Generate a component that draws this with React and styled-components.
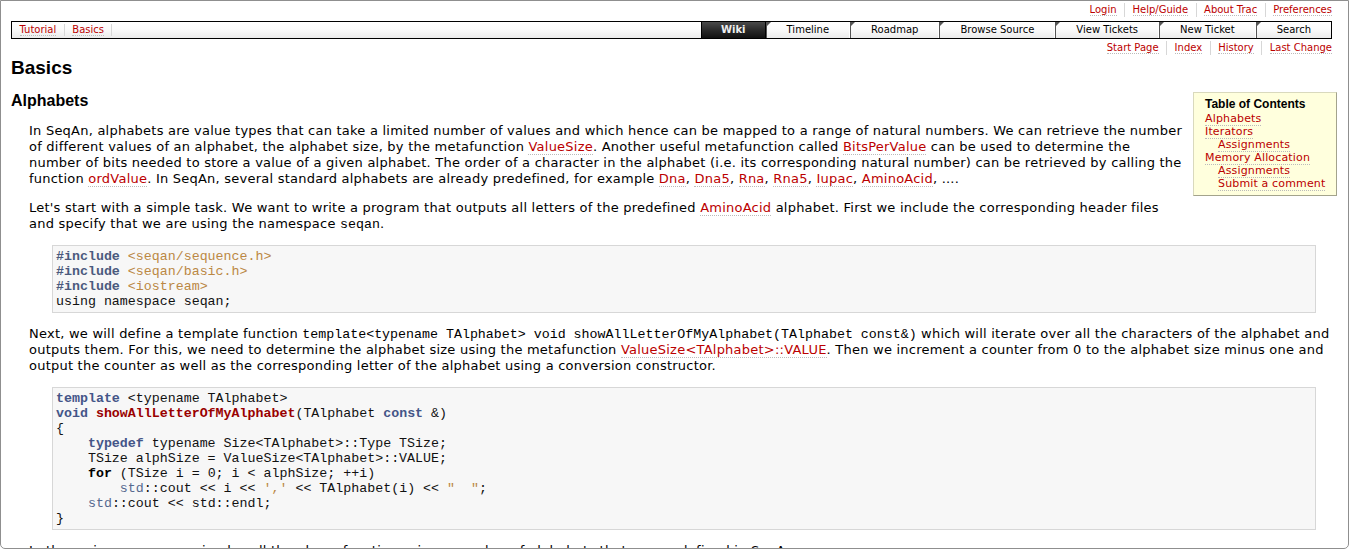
import React from 'react';
import styled, { createGlobalStyle } from 'styled-components';

const Global = createGlobalStyle`
  html, body { margin: 0; padding: 0; background: #fff; }
  body {
    font-family: "DejaVu Sans", Verdana, sans-serif;
    font-size: 13px;
    color: #000;
  }
`;

const Frame = styled.div`
  box-sizing: border-box;
  height: 549px;
  border: 1px solid #8f8f8f;
  border-radius: 0 0 5px 5px;
  overflow: hidden;
  padding: 0 16px 0 10px;
`;

const NavList = styled.ul`
  list-style: none;
  margin: 0;
  padding: 0;
  display: flex;
  justify-content: flex-end;
  align-items: center;
  height: ${(p) => p.$h}px;
  font-size: 10px;
`;

const NavItem = styled.li`
  padding: 0 7.5px;
  line-height: 14px;
  border-left: 1px solid #d7d7d7;
  &:first-child { border-left: none; }
  &:last-child { padding-right: 0; }
`;

const Link = styled.a`
  color: #b00;
  text-decoration: none;
  border-bottom: 1px dotted #bbb;
  cursor: pointer;
`;

const MainNav = styled.nav`
  margin-top: 3px;
  height: 18px;
  box-sizing: border-box;
  border: 1px solid #000;
  background: linear-gradient(#fff, #fbfbfb 45%, #ebebeb);
  display: flex;
  justify-content: space-between;
  align-items: stretch;
  font-size: 10px;
`;

const Crumbs = styled.ul`
  list-style: none;
  margin: 0;
  padding: 0;
  display: flex;
  align-items: center;
`;

const Crumb = styled.li`
  padding: 0 7.5px;
  line-height: 12px;
  border-right: 1px solid #d7d7d7;
`;

const Tabs = styled.ul`
  list-style: none;
  margin: 0;
  padding: 0;
  display: flex;
`;

const Tab = styled.li`
  position: relative;
  padding: 0 ${(p) => (p.$active ? 19 : 20)}px;
  line-height: 16px;
  border-left: 1px solid ${(p) => (p.$active ? '#000' : '#555')};
  border-right: 1px solid ${(p) => (p.$active ? '#000' : '#fff')};
  color: ${(p) => (p.$active ? '#eee' : '#000')};
  font-weight: ${(p) => (p.$active ? 'bold' : 'normal')};
  background: ${(p) => (p.$active ? 'linear-gradient(#4a4a4a, #2a2a2a 50%, #111)' : 'transparent')};
  &:last-child { border-right: none; }
  &::before {
    content: '';
    display: ${(p) => (p.$active ? 'none' : 'block')};
    position: absolute;
    top: 0;
    left: 0;
    width: 0;
    height: 0;
    border-top: 4px solid #555;
    border-right: 4px solid transparent;
  }
`;

const Title = styled.h1`
  font-family: "Liberation Sans", Arial, sans-serif;
  font-weight: bold;
  font-size: 19px;
  line-height: 22px;
  margin: 0;
`;

const Wiki = styled.div`
  padding-top: 13px;
`;

const Toc = styled.div`
  float: right;
  box-sizing: border-box;
  width: 144px;
  margin: 0 -5px 13px 10px;
  padding: 4px 10px 5px 10px;
  background: #ffd;
  border: 1px solid;
  border-color: #d9d9bd #a3a38c #a3a38c #d9d9bd;
`;

const TocTitle = styled.h4`
  font-family: "Liberation Sans", Arial, sans-serif;
  font-weight: bold;
  font-size: 12px;
  line-height: 15px;
  margin: 0 0 0 1px;
`;

const TocList = styled.ul`
  list-style: none;
  margin: 0;
  padding: 0 0 0 ${(p) => (p.$nested ? 13 : 1)}px;
  font-size: 11px;
  line-height: 13px;
  letter-spacing: 0.15px;
`;

const Section = styled.h2`
  font-family: "Liberation Sans", Arial, sans-serif;
  font-weight: bold;
  font-size: 16px;
  line-height: 18px;
  margin: 0;
`;

const Para = styled.p`
  margin: 13px 0 13px 18px;
  line-height: 16px;
  letter-spacing: 0.23px;
  white-space: nowrap;
`;

const Code = styled.code`
  font-family: "Liberation Mono", "Courier New", monospace;
  font-size: 13.3px;
  line-height: 14px;
  letter-spacing: 0;
`;

const Pre = styled.pre`
  margin: 13px 16px 13px 41px;
  padding: 3px;
  background: #f7f7f7;
  border: 1px solid #d7d7d7;
  font-family: "Liberation Mono", "Courier New", monospace;
  font-size: 13.3px;
  line-height: 15px;
  color: #111;
  white-space: pre;
`;

const Tok = styled.span`
  color: ${(p) =>
    ({ kt: '#445588', pp: '#4b5a7d', nf: '#990000', ns: '#56698f', s: '#bb8844', k: '#000' }[p.$t] || 'inherit')};
  font-weight: ${(p) => (['kt', 'pp', 'nf', 'k'].includes(p.$t) ? 'bold' : 'normal')};
`;

const metaLinks = ['Login', 'Help/Guide', 'About Trac', 'Preferences'];
const tabs = ['Wiki', 'Timeline', 'Roadmap', 'Browse Source', 'View Tickets', 'New Ticket', 'Search'];
const ctxLinks = ['Start Page', 'Index', 'History', 'Last Change'];

export default function App() {
  return (
    <>
      <Global />
      <Frame>
        <NavList $h={17}>
          {metaLinks.map((l) => (
            <NavItem key={l}><Link>{l}</Link></NavItem>
          ))}
        </NavList>

        <MainNav>
          <Crumbs>
            <Crumb><Link>Tutorial</Link></Crumb>
            <Crumb><Link>Basics</Link></Crumb>
          </Crumbs>
          <Tabs>
            {tabs.map((t) => (
              <Tab key={t} $active={t === 'Wiki'}>{t}</Tab>
            ))}
          </Tabs>
        </MainNav>

        <NavList $h={18}>
          {ctxLinks.map((l) => (
            <NavItem key={l}><Link>{l}</Link></NavItem>
          ))}
        </NavList>

        <Title>Basics</Title>

        <Wiki>
          <Toc>
            <TocTitle>Table of Contents</TocTitle>
            <TocList>
              <li><Link>Alphabets</Link></li>
              <li><Link>Iterators</Link>
                <TocList $nested><li><Link>Assignments</Link></li></TocList>
              </li>
              <li><Link>Memory Allocation</Link>
                <TocList $nested>
                  <li><Link>Assignments</Link></li>
                  <li><Link>Submit a comment</Link></li>
                </TocList>
              </li>
            </TocList>
          </Toc>

          <Section>Alphabets</Section>

          <Para>
            In SeqAn, alphabets are value types that can take a limited number of values and which hence can be mapped to a range of natural numbers. We can retrieve the number<br />
            of different values of an alphabet, the alphabet size, by the metafunction <Link>ValueSize</Link>. Another useful metafunction called <Link>BitsPerValue</Link> can be used to determine the<br />
            number of bits needed to store a value of a given alphabet. The order of a character in the alphabet (i.e. its corresponding natural number) can be retrieved by calling the<br />
            function <Link>ordValue</Link>. In SeqAn, several standard alphabets are already predefined, for example <Link>Dna</Link>, <Link>Dna5</Link>, <Link>Rna</Link>, <Link>Rna5</Link>, <Link>Iupac</Link>, <Link>AminoAcid</Link>, ....
          </Para>

          <Para>
            Let's start with a simple task. We want to write a program that outputs all letters of the predefined <Link>AminoAcid</Link> alphabet. First we include the corresponding header files<br />
            and specify that we are using the namespace <Code>seqan</Code>.
          </Para>

          <Pre>
            <Tok $t="pp">#include</Tok> <Tok $t="s">&lt;seqan/sequence.h&gt;</Tok>{'\n'}
            <Tok $t="pp">#include</Tok> <Tok $t="s">&lt;seqan/basic.h&gt;</Tok>{'\n'}
            <Tok $t="pp">#include</Tok> <Tok $t="s">&lt;iostream&gt;</Tok>{'\n'}
            {'using namespace seqan;'}
          </Pre>

          <Para>
            Next, we will define a template function <Code>template&lt;typename TAlphabet&gt; void showAllLetterOfMyAlphabet(TAlphabet const&amp;)</Code> which will iterate over all the characters of the alphabet and<br />
            outputs them. For this, we need to determine the alphabet size using the metafunction <Link>ValueSize&lt;TAlphabet&gt;::VALUE</Link>. Then we increment a counter from 0 to the alphabet size minus one and<br />
            output the counter as well as the corresponding letter of the alphabet using a conversion constructor.
          </Para>

          <Pre>
            <Tok $t="kt">template</Tok>{' <typename TAlphabet>\n'}
            <Tok $t="kt">void</Tok> <Tok $t="nf">showAllLetterOfMyAlphabet</Tok>{'(TAlphabet '}<Tok $t="kt">const</Tok>{' &)\n'}
            {'{\n    '}
            <Tok $t="kt">typedef</Tok>{' typename Size<TAlphabet>::Type TSize;\n'}
            {'    TSize alphSize = ValueSize<TAlphabet>::VALUE;\n    '}
            <Tok $t="k">for</Tok>{' (TSize i = 0; i < alphSize; ++i)\n        '}
            <Tok $t="ns">std</Tok>{'::cout << i << '}<Tok $t="s">','</Tok>{' << TAlphabet(i) << '}<Tok $t="s">"  "</Tok>{';\n    '}
            <Tok $t="ns">std</Tok>{'::cout << std::endl;\n}'}
          </Pre>

          <Para>
            In the main program we simply call the above function using a number of alphabets that are predefined in SeqAn.
          </Para>
        </Wiki>
      </Frame>
    </>
  );
}
